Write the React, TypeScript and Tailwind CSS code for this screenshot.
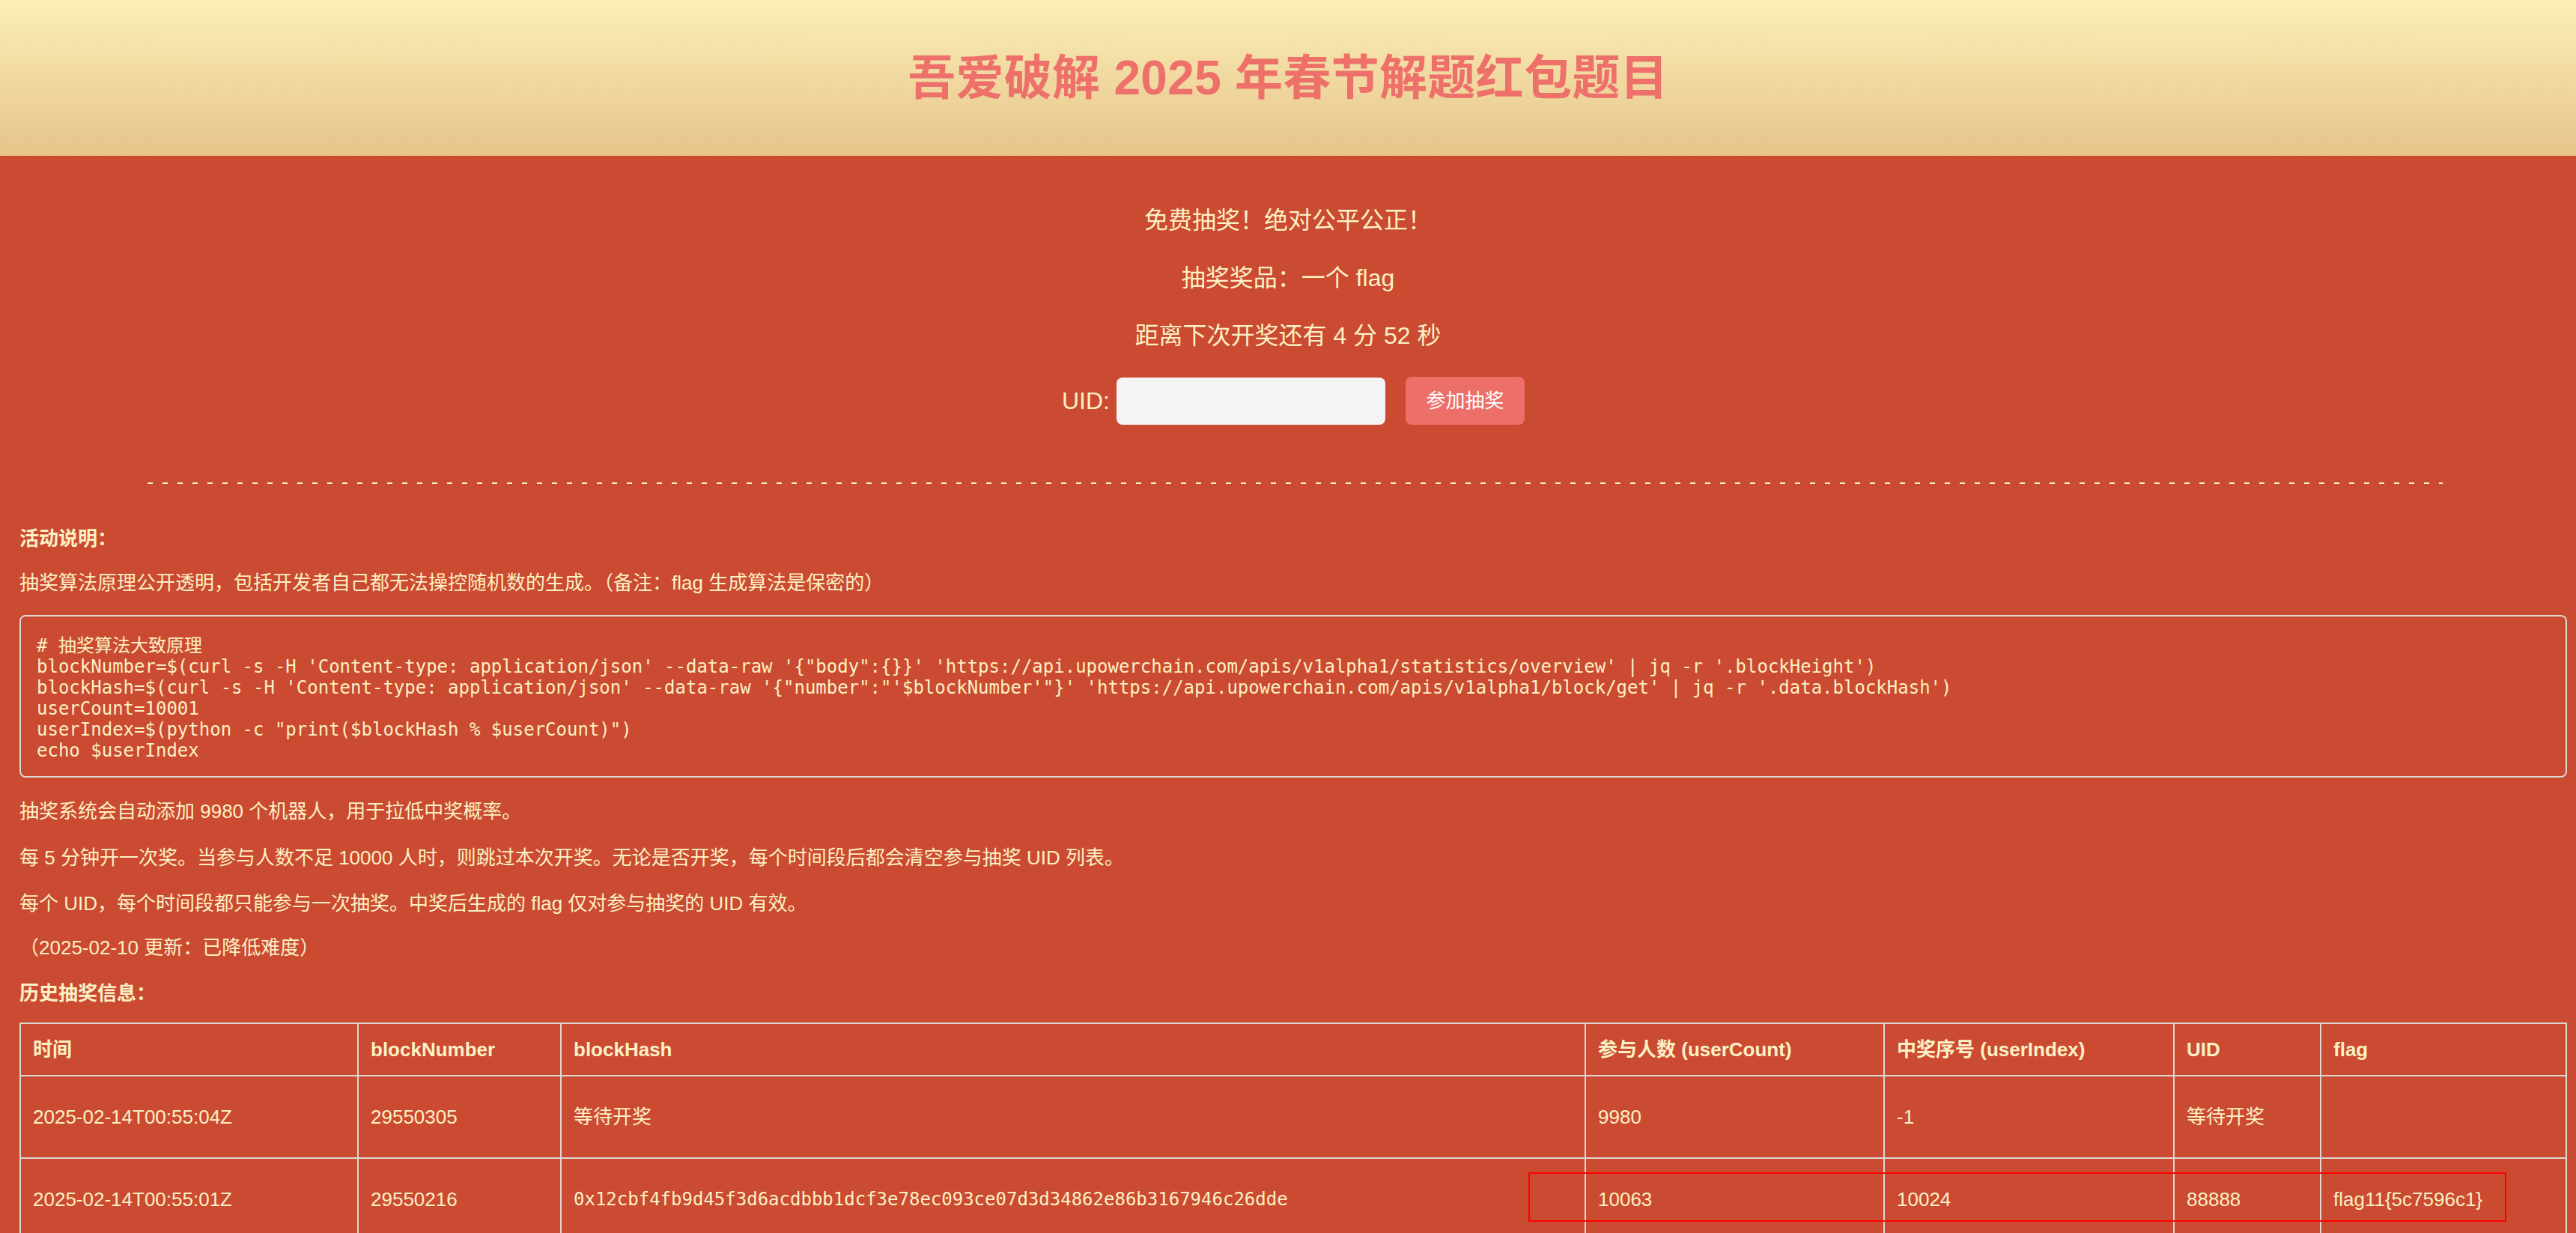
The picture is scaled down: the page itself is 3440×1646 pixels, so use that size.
const sans = "font-['Liberation_Sans','Noto_Sans_CJK_SC',sans-serif]";
const mono = "font-['DejaVu_Sans_Mono','Noto_Sans_CJK_SC',monospace]";

const code = `# 抽奖算法大致原理
blockNumber=$(curl -s -H 'Content-type: application/json' --data-raw '{"body":{}}' 'https://api.upowerchain.com/apis/v1alpha1/statistics/overview' | jq -r '.blockHeight')
blockHash=$(curl -s -H 'Content-type: application/json' --data-raw '{"number":"'$blockNumber'"}' 'https://api.upowerchain.com/apis/v1alpha1/block/get' | jq -r '.data.blockHash')
userCount=10001
userIndex=$(python -c "print($blockHash % $userCount)")
echo $userIndex`;

const history = [
    {
        time: '2025-02-14T00:55:04Z',
        blockNumber: '29550305',
        blockHash: '等待开奖',
        userCount: '9980',
        userIndex: '-1',
        uid: '等待开奖',
        flag: '',
    },
    {
        time: '2025-02-14T00:55:01Z',
        blockNumber: '29550216',
        blockHash: '0x12cbf4fb9d45f3d6acdbbb1dcf3e78ec093ce07d3d34862e86b3167946c26dde',
        userCount: '10063',
        userIndex: '10024',
        uid: '88888',
        flag: 'flag11{5c7596c1}',
    },
]

const cell = "border-2 border-[#dcd8d2] px-[16px] text-left align-middle"

export default function App() {
    return (
        <div className={`${sans} min-h-screen bg-[#cb4a32] text-[#fbf1c4]`}>
            <header className="h-[208px] flex items-center justify-center bg-gradient-to-b from-[#fbefb7] to-[#e6c48a]">
                <h1 className="text-[64px] font-bold text-[#ee706a] leading-none tracking-[0.3px]">吾爱破解 2025 年春节解题红包题目</h1>
            </header>

            <section className="flex flex-col items-center pt-[64px] gap-[32px] text-[32px] leading-[45px]">
                <p>免费抽奖！绝对公平公正！</p>
                <p>抽奖奖品：一个 flag</p>
                <p>距离下次开奖还有 4 分 52 秒</p>
                <div className="flex items-center h-[64px] pl-[14px]">
                    <label>UID:</label>
                    <input className="ml-[9px] w-[359px] h-[63px] rounded-[8px] bg-[#f4f4f4] outline-none"/>
                    <button className="ml-[27px] w-[159px] h-[64px] rounded-[8px] bg-[#ec6f69] text-white text-[26px]">参加抽奖</button>
                </div>
            </section>

            <div className="mt-[77px] ml-[197px] w-[3065px] h-[2px] bg-[repeating-linear-gradient(90deg,#fbf1c4_0_7px,transparent_7px_20px)]"/>

            <main className="pl-[26px] pr-[12px] pb-[60px] text-[26px] leading-[36px]">
                <p className="mt-[55px] font-bold">活动说明：</p>
                <p className="mt-[23px]">抽奖算法原理公开透明，包括开发者自己都无法操控随机数的生成。（备注：flag 生成算法是保密的）</p>
                <pre className={`${mono} mt-[25px] border-2 border-[#dcd8d2] rounded-[8px] pl-[21px] pt-[25px] pb-[20px] text-[24px] leading-[28px]`}>{code}</pre>
                <p className="mt-[27px]">抽奖系统会自动添加 9980 个机器人，用于拉低中奖概率。</p>
                <p className="mt-[26px]">每 5 分钟开一次奖。当参与人数不足 10000 人时，则跳过本次开奖。无论是否开奖，每个时间段后都会清空参与抽奖 UID 列表。</p>
                <p className="mt-[25px]">每个 UID，每个时间段都只能参与一次抽奖。中奖后生成的 flag 仅对参与抽奖的 UID 有效。</p>
                <p className="mt-[23px]">（2025-02-10 更新：已降低难度）</p>
                <p className="mt-[25px] font-bold">历史抽奖信息：</p>

                <div className="relative mt-[21px]">
                    <table className="w-full table-fixed border-collapse">
                        <colgroup>
                            <col className="w-[451px]"/>
                            <col className="w-[271px]"/>
                            <col className="w-[1368px]"/>
                            <col className="w-[399px]"/>
                            <col className="w-[387px]"/>
                            <col className="w-[196px]"/>
                            <col/>
                        </colgroup>
                        <thead>
                            <tr className="h-[70px] font-bold">
                                <th className={cell}>时间</th>
                                <th className={cell}>blockNumber</th>
                                <th className={cell}>blockHash</th>
                                <th className={cell}>参与人数 (userCount)</th>
                                <th className={cell}>中奖序号 (userIndex)</th>
                                <th className={cell}>UID</th>
                                <th className={cell}>flag</th>
                            </tr>
                        </thead>
                        <tbody>
                            {history.map((row) => (
                                <tr key={row.time} className="h-[110px]">
                                    <td className={cell}>{row.time}</td>
                                    <td className={cell}>{row.blockNumber}</td>
                                    <td className={row.blockHash.startsWith('0x') ? `${cell} ${mono} text-[24px]` : cell}>{row.blockHash}</td>
                                    <td className={cell}>{row.userCount}</td>
                                    <td className={cell}>{row.userIndex}</td>
                                    <td className={cell}>{row.uid}</td>
                                    <td className={cell}>{row.flag}</td>
                                </tr>
                            ))}
                        </tbody>
                    </table>
                    {/* annotation box from the screenshot */}
                    <div className="absolute left-[2015px] top-[200px] w-[1306px] h-[66px] border-2 border-[#ff0000]"/>
                </div>
            </main>
        </div>
    )
}
